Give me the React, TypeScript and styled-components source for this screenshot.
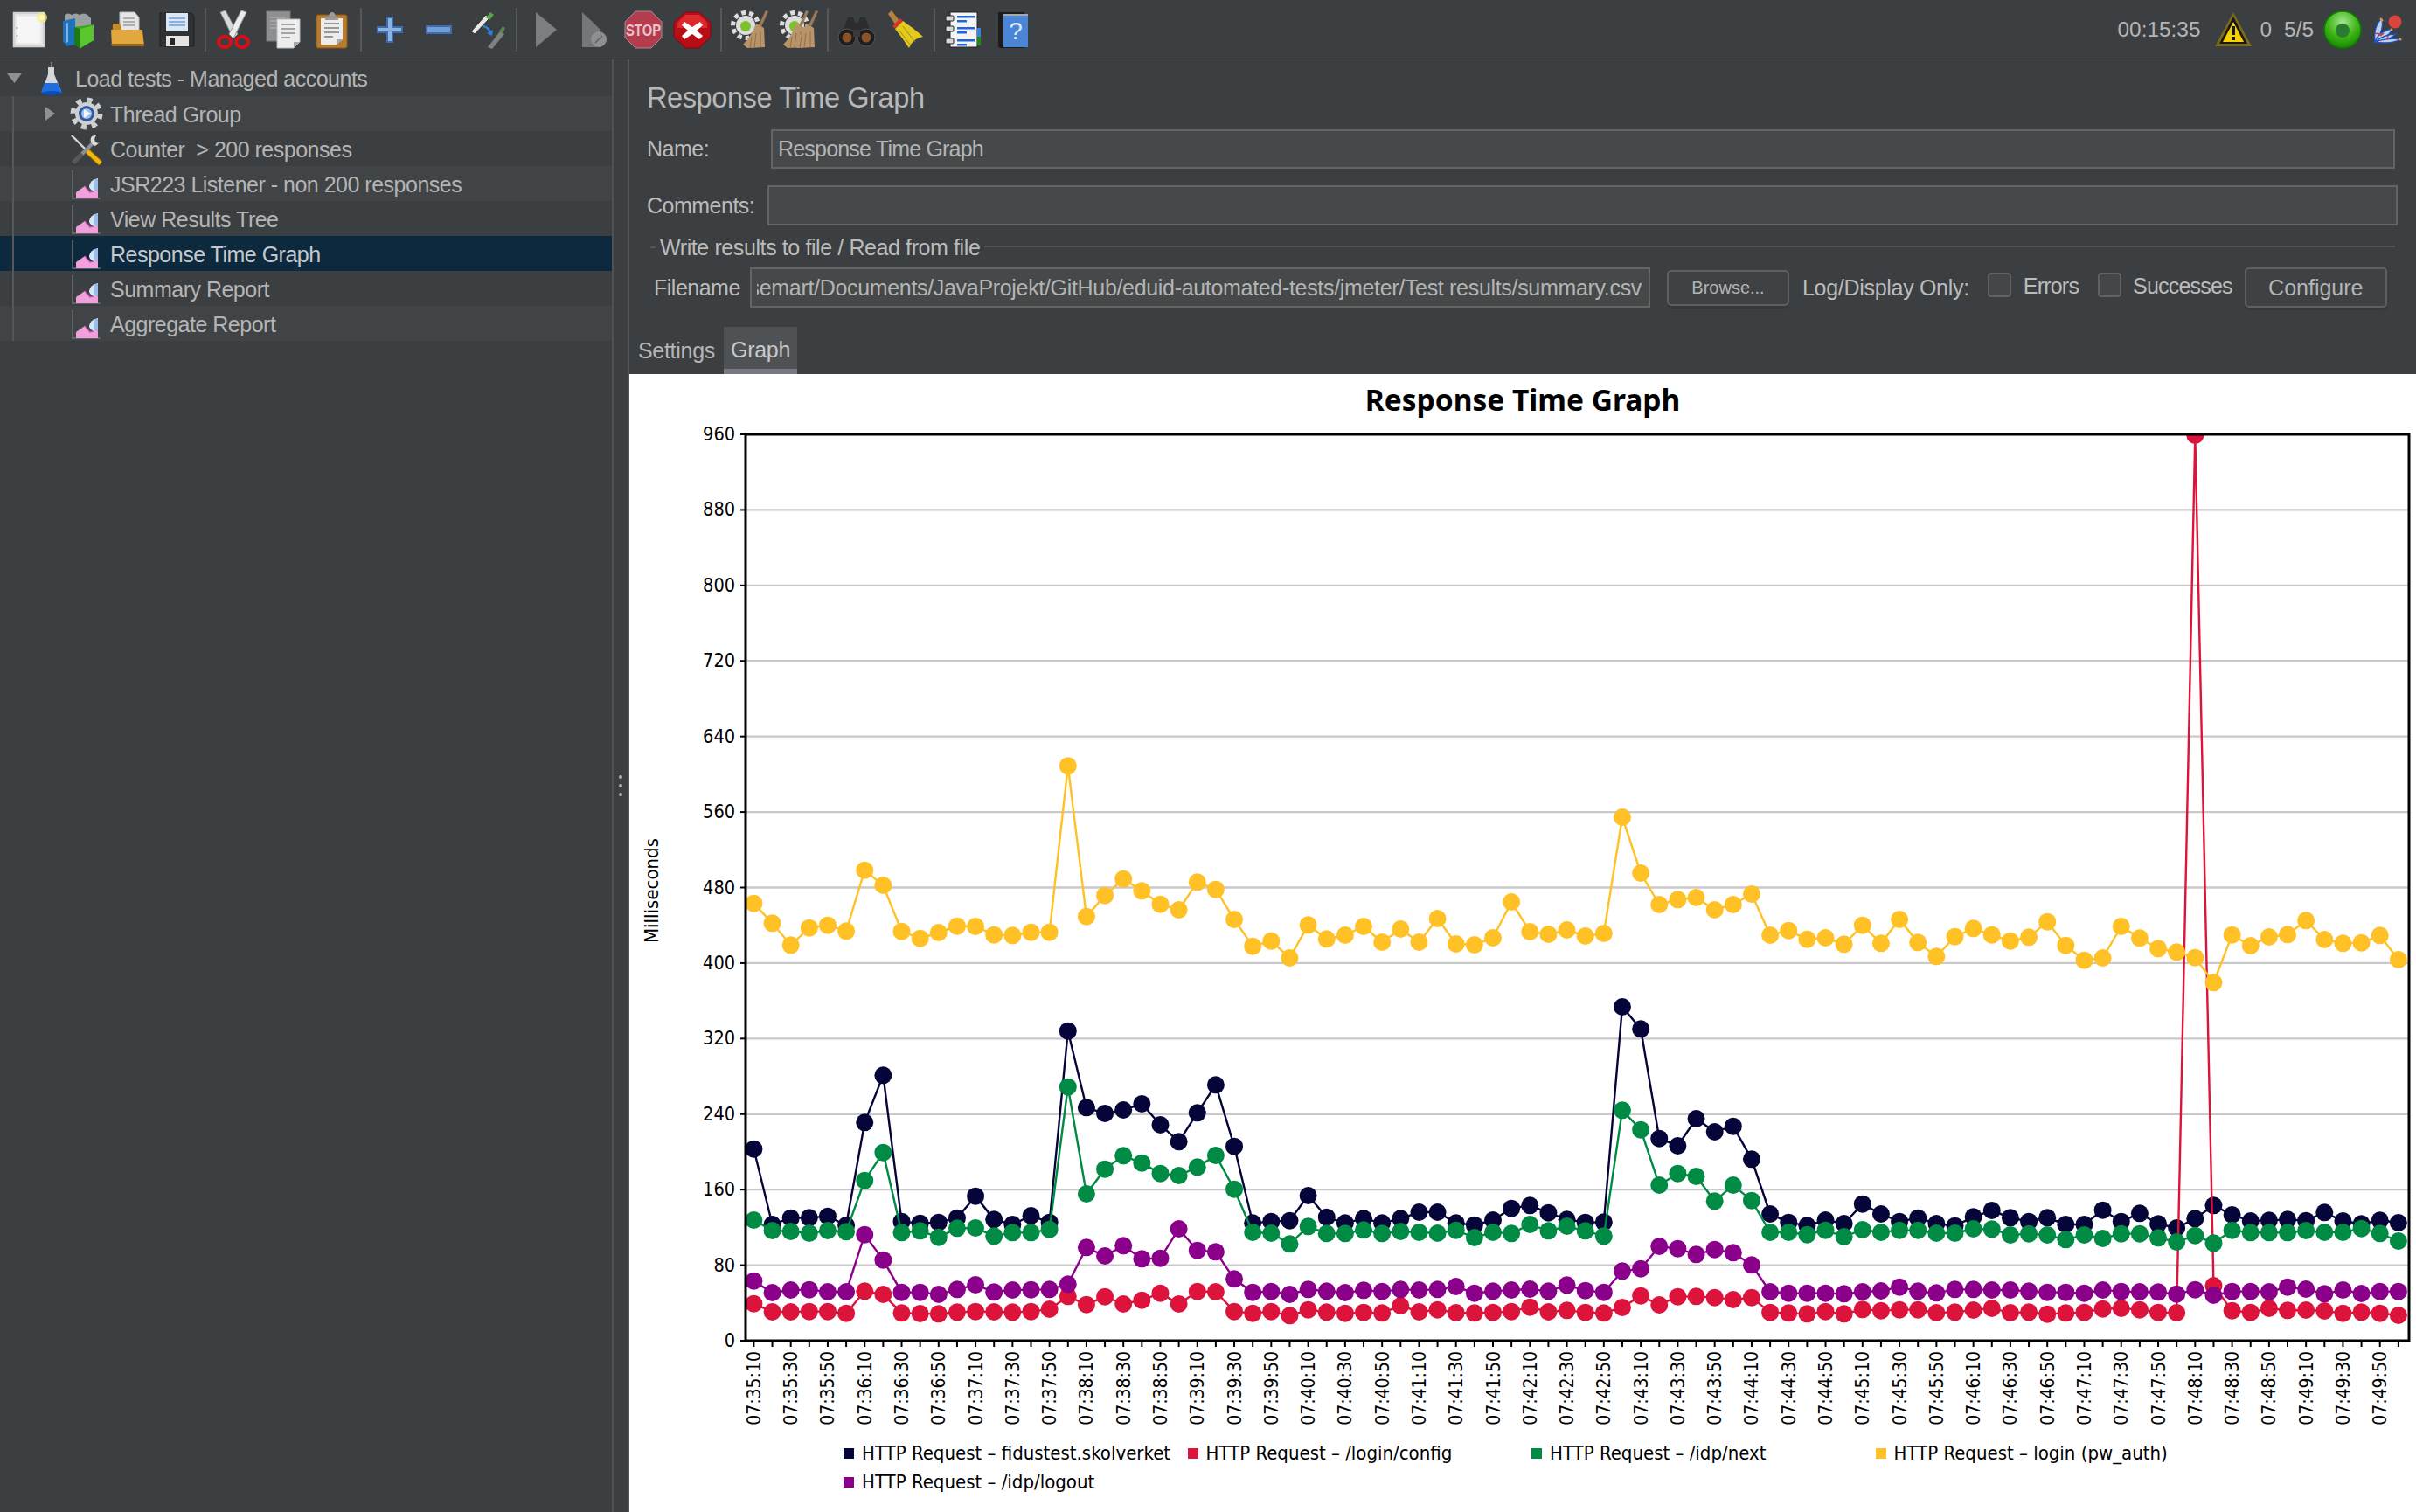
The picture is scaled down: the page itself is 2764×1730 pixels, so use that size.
import React from "react";
import styled, { createGlobalStyle } from "styled-components";

const UI_FONT = `"Liberation Sans", Arial, sans-serif`;
const CHART_FONT = `"DejaVu Sans Condensed", "DejaVu Sans", sans-serif`;

const Global = createGlobalStyle`
  html, body { margin: 0; padding: 0; background: #3c3f41; }
  #root { width: 2764px; height: 1730px; overflow: hidden; }
`;

const Frame = styled.div`
  width: 2764px; height: 1730px; display: flex; flex-direction: column;
  background: #3c3f41; color: #bbbbbb; font-family: ${UI_FONT}; font-size: 25px;
`;
const Toolbar = styled.header`
  height: 68px; flex: none; box-sizing: border-box; display: flex; align-items: center;
  padding-left: 6px; padding-right: 12px; border-bottom: 1px solid #323436;
`;
const ToolButton = styled.div`
  width: 56px; height: 67px; flex: none; display: flex; align-items: center; justify-content: center;
  svg { width: 44px; height: 44px; display: block; }
`;
const ToolSep = styled.div`
  width: 2px; height: 50px; flex: none; margin: 0 4px; background: #55585a;
`;
const Status = styled.div`
  margin-left: auto; display: flex; align-items: center; color: #b5b5b5; font-size: 24.4px;
`;
const StatusText = styled.span<{ $left: number }>`
  margin-left: ${(p) => p.$left}px; white-space: nowrap;
`;
const StatusIcon = styled.div<{ $left: number }>`
  margin-left: ${(p) => p.$left}px; width: 44px; height: 44px; flex: none;
  svg { width: 44px; height: 44px; display: block; }
`;
const Body = styled.div`
  flex: 1; min-height: 0; display: flex;
`;
const Sidebar = styled.aside`
  width: 700px; flex: none; display: flex; flex-direction: column; letter-spacing: -0.5px;
`;
const TreeChildren = styled.div`
  position: relative;
  &::before { content: ""; position: absolute; left: 14px; top: 0; bottom: 0; width: 2px; background: #55585a; z-index: 1; }
`;
const Row = styled.div<{ $level: number; $selected?: boolean; $odd?: boolean }>`
  height: 40px; display: flex; align-items: center; white-space: nowrap;
  padding-left: ${(p) => (p.$level === 0 ? 8 : 52)}px;
  background: ${(p) => (p.$selected ? "#0d293e" : p.$odd ? "#414447" : "#3c3f41")};
  color: ${(p) => (p.$selected ? "#c4c8cb" : "#b4b4b4")};
`;
const RootRow = styled(Row)`
  height: 42px;
`;
const RowLabel = styled.span`
  padding-top: 3px; white-space: pre;
`;
const CaretSlot = styled.div<{ $level: number }>`
  width: ${(p) => (p.$level === 0 ? 31 : 27)}px; flex: none; display: flex; align-items: center;
  svg { display: block; }
`;
const TreeIcon = styled.div`
  width: 40px; height: 40px; flex: none; margin-right: 7px;
  svg { width: 40px; height: 40px; display: block; }
`;
const Splitter = styled.div`
  width: 20px; flex: none; box-sizing: border-box; border-left: 2px solid #505355; border-right: 2px solid #505355;
  display: flex; flex-direction: column; align-items: center; justify-content: center; gap: 6px;
`;
const GripDot = styled.span`
  width: 4px; height: 4px; border-radius: 50%; background: #b5b5b5;
`;
const Main = styled.main`
  flex: 1; min-width: 0; display: flex; flex-direction: column;
`;
const PanelTitle = styled.div`
  height: 44px; margin: 22px 0 0 20px; font-size: 32.5px; line-height: 44px; color: #b8b8b8; letter-spacing: -0.4px;
`;
const FieldRow = styled.div<{ $top: number; $height: number; $right: number }>`
  height: ${(p) => p.$height}px; margin: ${(p) => p.$top}px ${(p) => p.$right}px 0 20px; display: flex; align-items: center;
`;
const FieldLabel = styled.label<{ $width: number }>`
  width: ${(p) => p.$width}px; flex: none; letter-spacing: -0.5px;
`;
const Input = styled.div`
  flex: 1; height: 100%; box-sizing: border-box; background: #45494a; border: 2px solid #646464;
  display: flex; align-items: center; padding-left: 6px; overflow: hidden; white-space: nowrap; letter-spacing: -0.8px;
  color: #b4b4b4;
`;
const GroupHead = styled.div`
  height: 38px; margin: 6px 24px 0 24px; display: flex; align-items: center; gap: 5px; white-space: nowrap;
  letter-spacing: -0.4px;
  &::before { content: ""; width: 6px; height: 2px; background: #535658; flex: none; }
  &::after { content: ""; flex: 1; height: 2px; background: #535658; margin-top: -2px; }
`;
const FileRow = styled.div`
  height: 46px; margin: 4px 0 0 28px; display: flex; align-items: center; white-space: nowrap;
`;
const FileInput = styled.div`
  width: 1030px; height: 100%; flex: none; box-sizing: border-box; background: #45494a; border: 2px solid #646464;
  display: flex; align-items: center; padding: 0 8px 0 6px; color: #b4b4b4;
`;
const FileClip = styled.div`
  flex: 1; min-width: 0; display: flex; justify-content: flex-end; overflow: hidden; letter-spacing: -0.32px;
`;
const PushButton = styled.button<{ $left: number; $width: number; $height: number; $size: number }>`
  margin-left: ${(p) => p.$left}px; width: ${(p) => p.$width}px; height: ${(p) => p.$height}px; flex: none;
  box-sizing: border-box; padding: 0; background: #3e4244; color: #b4b4b4; border: 2px solid #5e6060; border-radius: 5px;
  font-family: ${UI_FONT}; font-size: ${(p) => p.$size}px; box-shadow: 0 3px 0 #36383a;
`;
const PlainLabel = styled.span<{ $left: number }>`
  margin-left: ${(p) => p.$left}px; letter-spacing: -0.3px;
`;
const CheckLabel = styled.span<{ $left: number }>`
  margin-left: ${(p) => p.$left}px; letter-spacing: -0.8px; margin-top: -4px;
`;
const CheckBox = styled.span<{ $left: number }>`
  margin-left: ${(p) => p.$left}px; width: 27px; height: 28px; box-sizing: border-box; flex: none; margin-top: -6px;
  background: #43474a; border: 2px solid #5f6264; border-radius: 4px;
`;
const Tabs = styled.nav`
  height: 54px; margin-top: 22px; display: flex; flex: none; padding-left: 10px;
`;
const Tab = styled.div<{ $active?: boolean }>`
  height: 100%; box-sizing: border-box; display: flex; align-items: center; letter-spacing: -0.3px;
  justify-content: ${(p) => (p.$active ? "center" : "flex-start")};
  width: ${(p) => (p.$active ? 84 : 98)}px;
  background: ${(p) => (p.$active ? "#4e5254" : "transparent")};
  border-bottom: ${(p) => (p.$active ? "6px solid #747a80" : "none")};
  padding-top: ${(p) => (p.$active ? 5 : 1)}px;
  color: ${(p) => (p.$active ? "#c8c8c8" : "#b4b4b4")};
`;
const ChartPanel = styled.section`
  flex: 1; min-height: 0; background: #ffffff; display: flex; flex-direction: column; color: #000;
`;
const ChartTitle = styled.h2`
  height: 52px; margin: 0; padding-top: 3px; box-sizing: content-box; text-align: center; font: bold 33.5px/52px "Noto Sans", sans-serif;
`;
const PlotSvg = styled.svg`
  width: 2044px; height: 1157px; margin-top: 1px; display: block; flex: none;
`;
const Legend = styled.div`
  display: grid; grid-template-columns: repeat(4, 393.5px); grid-auto-rows: 33px; padding: 5px 0 0 245px;
`;
const LegendItem = styled.div`
  display: flex; align-items: center; gap: 9px; font: 22px ${CHART_FONT}; white-space: nowrap;
`;
const Swatch = styled.span<{ $color: string }>`
  width: 12px; height: 12px; flex: none; background: ${(p) => p.$color};
`;

/* ---------- chart data: pixel rows read from the plot ---------- */
const NAVY = [341,600,578,577,572,603,250,88,590,596,593,578,503,583,600,570,593,-64,199,219,207,186,258,316,217,121,332,
  595,590,587,501,575,595,580,595,580,558,558,595,602,585,545,535,560,583,593,592,-147,-71,305,330,237,282,263,376,564,593,604,585,
  597,530,564,590,578,597,605,574,552,577,590,577,600,600,551,590,562,598,612,580,535,567,588,586,583,587,559,588,598,586,594];
const GREEN = [585,621,624,630,621,625,449,353,628,622,644,613,612,640,628,628,617,128,495,410,364,389,425,432,403,363,479,
  627,630,667,607,631,631,619,631,624,627,630,620,645,627,631,600,622,606,622,640,208,275,465,425,435,520,465,518,627,627,635,620,
  642,618,627,620,620,630,630,615,616,636,632,636,652,636,648,632,632,646,660,638,664,620,628,628,628,621,627,627,614,631,657];
const PURPLE = [794,834,825,824,831,831,635,722,833,833,840,823,807,832,825,824,823,805,679,708,673,718,716,615,689,694,787,
  833,830,840,823,829,834,826,830,823,825,823,813,836,829,825,822,829,808,827,833,760,752,675,683,703,686,697,739,831,836,836,836,
  838,831,828,815,829,835,823,823,825,825,829,833,833,836,825,830,831,832,839,824,843,830,830,831,815,822,838,825,837,830,830];
const RED = [872,900,900,899,899,905,829,840,904,906,907,901,899,900,901,899,891,847,875,848,873,860,836,873,830,831,899,
  905,899,913,893,901,905,902,904,879,900,893,903,904,902,899,884,900,895,902,904,885,845,876,848,847,851,858,851,902,904,907,899,
  907,892,896,893,893,903,901,894,888,903,901,908,904,902,890,888,893,902,903,-2109,810,896,902,888,895,894,897,905,901,905,912];
const YELLOW = [578,646,721,662,653,673,464,516,674,698,678,656,657,686,688,677,677,106,623,551,494,535,581,600,505,530,633,725,707,765,652,700,
  687,657,711,666,711,630,717,720,696,573,675,684,669,690,681,282,474,582,565,558,600,582,546,687,671,701,696,718,653,715,633,712,760,692,664,686,707,694,641,722,773,765,657,697,733,745,764,850,686,723,693,685,637,702,715,713,688,771];

const PLOT = { left: 853, right: 2756, top: 496, bottom: 1533, x0: 862.4, dx: 21.14 };
const xAt = (i: number) => PLOT.x0 + i * PLOT.dx;
const SERIES = [
  { name: "HTTP Request – fidustest.skolverket", color: "#05053a", base: 1200, rows: NAVY },
  { name: "HTTP Request – /login/config", color: "#dc143c", base: 1200, rows: RED },
  { name: "HTTP Request – /idp/next", color: "#008b45", base: 1200, rows: GREEN },
  { name: "HTTP Request – login (pw_auth)", color: "#ffc125", base: 840, rows: YELLOW },
  { name: "HTTP Request – /idp/logout", color: "#8b008b", base: 1200, rows: PURPLE },
];
const pad = (n: number) => String(n).padStart(2, "0");
const stamp = (i: number) => {
  const t = 7 * 3600 + 35 * 60 + 10 + i * 10;
  return `${pad(Math.floor(t / 3600))}:${pad(Math.floor(t / 60) % 60)}:${pad(t % 60)}`;
};
const Y_VALUES = [0, 80, 160, 240, 320, 400, 480, 560, 640, 720, 800, 880, 960];
const yOfValue = (v: number) => PLOT.bottom - (v * (PLOT.bottom - PLOT.top)) / 960;

const Plot = () => (
  <PlotSvg viewBox="720 483 2044 1157">
    <defs>
      <clipPath id="plotClip">
        <rect x={PLOT.left} y={PLOT.top} width={PLOT.right - PLOT.left} height={PLOT.bottom - PLOT.top} />
      </clipPath>
    </defs>
    {Y_VALUES.slice(1, -1).map((v) => (
      <line key={v} x1={PLOT.left} x2={PLOT.right} y1={yOfValue(v)} y2={yOfValue(v)} stroke="#c9c9c9" strokeWidth="2.4" />
    ))}
    <g clipPath="url(#plotClip)">
      {SERIES.map((s) => {
        const pts = s.rows.map((z, i) => [xAt(i), s.base + z / 3]);
        return (
          <g key={s.name} fill={s.color}>
            <polyline points={pts.map((p) => p.join(",")).join(" ")} fill="none" stroke={s.color} strokeWidth="2.4" />
            {pts.map((p, i) => <circle key={i} cx={p[0]} cy={p[1]} r="10" />)}
          </g>
        );
      })}
    </g>
    <rect x={PLOT.left} y={PLOT.top} width={PLOT.right - PLOT.left} height={PLOT.bottom - PLOT.top} fill="none" stroke="#000" strokeWidth="3" />
    {Y_VALUES.map((v) => (
      <g key={v}>
        <line x1={PLOT.left - 6} x2={PLOT.left} y1={yOfValue(v)} y2={yOfValue(v)} stroke="#000" strokeWidth="2" />
        <text x={841} y={yOfValue(v) + 7} textAnchor="end" fontFamily={CHART_FONT} fontSize="21.5" fill="#000">{v}</text>
      </g>
    ))}
    {SERIES[0].rows.map((_, i) => (
      <line key={i} x1={xAt(i)} x2={xAt(i)} y1={PLOT.bottom} y2={PLOT.bottom + 7} stroke="#000" strokeWidth="2" />
    ))}
    {SERIES[0].rows.map((_, i) =>
      i % 2 === 0 ? (
        <text key={i} transform={`translate(${xAt(i) + 7.5} 1545) rotate(-90)`} textAnchor="end" fontFamily={CHART_FONT} fontSize="21" fill="#000">
          {stamp(i)}
        </text>
      ) : null
    )}
    <text transform="translate(753 1018) rotate(-90)" textAnchor="middle" fontFamily={CHART_FONT} fontSize="22" fill="#000">Milliseconds</text>
  </PlotSvg>
);

/* ---------- toolbar icons ---------- */
const IconNew = () => (
  <svg viewBox="0 0 44 44">
    <rect x="4" y="3" width="34" height="38" fill="#e9e9e9" stroke="#d2d2d2" strokeWidth="2.5" />
    <rect x="8" y="7" width="26" height="30" fill="#f6f6f6" />
    <circle cx="7.5" cy="20" r="1" fill="#999" /><circle cx="7.5" cy="29" r="1" fill="#999" />
    <circle cx="36" cy="8" r="6" fill="#f5ec8a" opacity=".75" /><circle cx="36" cy="8" r="3" fill="#fff8b0" />
  </svg>
);
const IconTemplates = () => (
  <svg viewBox="0 0 44 44">
    <path d="M6 5q4-3 8 0q5-3 9 0q5-3 9 0l4 4v14H6z" fill="#9aa0a2" />
    <path d="M4 12l14-3v30l-10 2-4-6z" fill="#1d72c0" /><path d="M7 15l3-1v22l-3 1z" fill="#7cb6e6" />
    <path d="M17 19l22-3v18L24 43l-7-4z" fill="#36a81c" /><path d="M24 21l15-4v17L24 43z" fill="#58c62c" />
    <path d="M17 19l7 2v22l-7-4z" fill="#1d7a12" />
  </svg>
);
const IconOpen = () => (
  <svg viewBox="0 0 44 44">
    <path d="M13 2h17l5 6v22H13z" fill="#e6e6e6" stroke="#bdbdbd" />
    <path d="M17 9h13M17 13h13M17 17h13" stroke="#9c9c9c" strokeWidth="1.5" />
    <path d="M5 15h7l1-2 2 9h24l2 19H4z" fill="#c58a27" />
    <path d="M3 22h35l3 19H4z" fill="#e0a83e" /><path d="M3 38h38v3H4z" fill="#96661a" />
  </svg>
);
const IconSave = () => (
  <svg viewBox="0 0 44 44">
    <path d="M3 3h36l3 3v35H3z" fill="#2f3133" stroke="#1f2022" />
    <rect x="10" y="3" width="25" height="21" fill="#dbe7f5" />
    <path d="M13 9h19M13 13h19M13 17h19" stroke="#6f9fd4" strokeWidth="1.6" />
    <rect x="10" y="29" width="26" height="12" fill="#e4e4e4" /><rect x="14" y="31" width="6" height="9" fill="#262626" />
  </svg>
);
const IconCut = () => (
  <svg viewBox="0 0 44 44">
    <path d="M6 2l6-2 14 27-5 5z" fill="#d9d9d9" stroke="#8d8d8d" /><path d="M36 2l-6-2L16 27l5 5z" fill="#ececec" stroke="#9a9a9a" />
    <ellipse cx="11" cy="36" rx="7" ry="6" fill="none" stroke="#d80f1b" strokeWidth="4" />
    <ellipse cx="31" cy="36" rx="7" ry="6" fill="none" stroke="#d80f1b" strokeWidth="4" />
  </svg>
);
const IconCopy = () => (
  <svg viewBox="0 0 44 44">
    <rect x="3" y="1" width="27" height="34" fill="#8d8f91" stroke="#77797a" />
    <path d="M7 8h18M7 12h18M7 16h18M7 20h18" stroke="#aaa" strokeWidth="1.5" />
    <path d="M15 10h26v26l-7 7H15z" fill="#ededed" stroke="#bcbcbc" /><path d="M34 43v-7h7z" fill="#a8a8a8" />
    <path d="M20 16h16M20 21h16M20 26h16M20 31h10" stroke="#8c8c8c" strokeWidth="1.6" />
  </svg>
);
const IconPaste = () => (
  <svg viewBox="0 0 44 44">
    <rect x="4" y="5" width="35" height="38" rx="2" fill="#b87a2c" stroke="#8a5a1c" />
    <path d="M9 9h25v24l-7 6H9z" fill="#ececec" /><path d="M27 39v-6h7z" fill="#a9a9a9" />
    <path d="M13 15h17M13 20h17M13 25h17M13 30h10" stroke="#7d7d7d" strokeWidth="1.6" />
    <path d="M14 7h4q1-5 4-5t4 5h3v4H14z" fill="#9a9a9a" />
  </svg>
);
const IconPlus = () => (
  <svg viewBox="0 0 44 44">
    <path d="M19 8h6v11h11v6H25v11h-6V25H8v-6h11z" fill="#8ab4e4" stroke="#3f6cae" strokeWidth="2" />
  </svg>
);
const IconMinus = () => (
  <svg viewBox="0 0 44 44">
    <rect x="8" y="18" width="28" height="8" fill="#6f9fd8" stroke="#3f6cae" strokeWidth="2" />
  </svg>
);
const IconToggle = () => (
  <svg viewBox="0 0 44 44">
    <path d="M3 24L20 5l4 4L7 27z" fill="#e8e8e8" stroke="#333" strokeWidth="1" />
    <path d="M20 8l5-6 4 3-5 6z" fill="#5ba04a" />
    <path d="M17 18q6 1 9 9" fill="none" stroke="#2d7fe0" strokeWidth="2.4" /><path d="M21 26l6 3 1-7z" fill="#2d7fe0" />
    <path d="M22 42l14-18 5 3-14 17z" fill="#8a8f8a" opacity=".85" /><path d="M35 24l4-6 3 2-3 7z" fill="#5c8a50" opacity=".9" />
  </svg>
);
const IconPlay = () => (
  <svg viewBox="0 0 44 44"><path d="M11 2l24 20-24 20z" fill="#7c7e80" /></svg>
);
const IconPlayNoTimer = () => (
  <svg viewBox="0 0 44 44">
    <path d="M8 2l20 19v21H8z" fill="#75777a" />
    <circle cx="27" cy="33" r="9" fill="#8d8f91" /><path d="M23 37l8-8" stroke="#5e6062" strokeWidth="1.5" />
  </svg>
);
const IconStop = () => (
  <svg viewBox="0 0 44 44">
    <path d="M13 1h18l12 12v18L31 43H13L1 31V13z" fill="#b53c4e" stroke="#9a8f92" strokeWidth="1" />
    <text transform="translate(22 29) scale(.78 1)" textAnchor="middle" fontFamily={UI_FONT} fontWeight="bold" fontSize="19" fill="#e9c3c9">STOP</text>
  </svg>
);
const IconShutdown = () => (
  <svg viewBox="0 0 44 44">
    <path d="M14 2h16l13 12v16L30 43H14L1 30V14z" fill="#b80d14" stroke="#7a0c10" strokeWidth="1" />
    <path d="M5 14L14 5h16l9 9v6H5z" fill="#dd2a2d" />
    <path d="M13 13l9 6 9-6 3 4-7 6 7 6-4 4-8-6-9 6-3-4 7-6-7-6z" fill="#fff" />
  </svg>
);
const Broom = ({ x = 0 }: { x?: number }) => (
  <g transform={`translate(${x} 0)`}>
    <path d="M40 0l3 1-8 18-3-2z" fill="#9c7a58" />
    <path d="M29 15l9 5 1 22-20 1-5-4q10-10 15-24z" fill="#b99469" />
    <path d="M24 30l-2 13M29 26l-2 17M34 24l0 18" stroke="#8f6f4c" strokeWidth="1" />
  </g>
);
const GearPlate = () => (
  <g>
    <circle cx="17" cy="17" r="11" fill="#dcdcdc" />
    <circle cx="17" cy="17" r="14.5" fill="none" stroke="#dcdcdc" strokeWidth="5" strokeDasharray="5 4" />
    <circle cx="17" cy="18" r="6" fill="#7cc02a" />
  </g>
);
const IconClear = () => (<svg viewBox="0 0 44 44"><GearPlate /><Broom /></svg>);
const IconClearAll = () => (<svg viewBox="0 0 44 44"><GearPlate /><Broom x={-10} /><Broom x={1} /></svg>);
const IconBinoculars = () => (
  <svg viewBox="0 0 44 44">
    <path d="M12 8h6l2 6h4l2-6h6l8 22H30l-4-8h-8l-4 8H4z" fill="#2c2c2e" />
    <circle cx="11" cy="31" r="10" fill="#1e1e20" stroke="#555" /><circle cx="33" cy="31" r="10" fill="#1e1e20" stroke="#555" />
    <circle cx="11" cy="31" r="5.5" fill="#8a5226" /><circle cx="33" cy="31" r="5.5" fill="#8a5226" />
    <rect x="18" y="22" width="8" height="8" fill="#3a3a3c" />
  </svg>
);
const IconBroomYellow = () => (
  <svg viewBox="0 0 44 44">
    <path d="M2 4l4-4 10 13-5 4z" fill="#b5823e" />
    <path d="M7 18l9-9 3 3-9 9z" fill="#d6322a" />
    <path d="M10 21l9-9q12 8 23 18-12 2-16 13-8-12-16-22z" fill="#e3c81e" />
    <path d="M14 22l14 18M19 18l14 18" stroke="#a58f12" strokeWidth="1" />
  </svg>
);
const IconFunctions = () => (
  <svg viewBox="0 0 44 44">
    <rect x="7" y="2" width="31" height="40" fill="#f4f4f4" stroke="#222" strokeWidth="1" />
    <rect x="38" y="20" width="4" height="10" fill="#3f7fe0" /><rect x="38" y="30" width="4" height="10" fill="#1e8a1e" />
    {[6, 18, 32].map((y) => (<rect key={y} x="2" y={y} width="9" height="6" rx="1" fill="#d8d8d8" stroke="#222" />))}
    {[6, 11, 19, 24, 33, 38].map((y, i) => (
      <rect key={y} x="15" y={y} width={i % 2 ? 11 : 20} height="2.5" fill="#1e66e0" />
    ))}
  </svg>
);
const IconHelp = () => (
  <svg viewBox="0 0 44 44">
    <path d="M6 2h30v41H9q-3 0-3-3z" fill="#1b1c1e" />
    <rect x="12" y="4" width="28" height="38" fill="#4b86d6" /><rect x="12" y="4" width="28" height="2" fill="#a6a8aa" />
    <text x="26" y="33" textAnchor="middle" fontFamily={UI_FONT} fontSize="28" fill="#dbe8f8">?</text>
  </svg>
);
const IconWarning = () => (
  <svg viewBox="0 0 44 44">
    <path d="M22 2L43 41H1z" fill="#7b6a1a" />
    <path d="M22 7L38 38H6z" fill="#181818" /><path d="M22 13L34 36H10z" fill="#f7d000" />
    <rect x="20" y="18" width="4" height="10" fill="#181818" /><rect x="20" y="30" width="4" height="4" fill="#181818" />
  </svg>
);
const IconOnline = () => (
  <svg viewBox="0 0 44 44">
    <defs>
      <radialGradient id="greenBall" cx="50%" cy="30%" r="70%">
        <stop offset="0" stopColor="#a4e892" /><stop offset=".55" stopColor="#42b81a" /><stop offset="1" stopColor="#158a00" />
      </radialGradient>
    </defs>
    <circle cx="22" cy="22" r="21" fill="url(#greenBall)" stroke="#0e7a00" strokeWidth="1.5" />
    <circle cx="22" cy="23" r="8" fill="#2b7a32" />
  </svg>
);
const IconFeather = () => (
  <svg viewBox="0 0 44 44">
    <g fill="#bcd0ee" stroke="#1f4fc0" strokeWidth="1.3">
      <path d="M9 36Q7 18 17 9q3 14-8 27z" />
      <path d="M9 36Q13 24 29 21q-6 12-20 15z" />
      <path d="M9 36Q20 27 33 27q-10 9-24 9z" />
      <path d="M9 36q14-5 30-3-14 6-30 3z" />
    </g>
    <path d="M15 9l3 3M27 21l2 2M37 32l2 2" stroke="#f0a030" strokeWidth="2" />
    <path d="M9 26l6 1M15 29l4-3M23 33l1-4" stroke="#d83a3a" strokeWidth="1.6" />
    <circle cx="32" cy="13" r="7.5" fill="#d9453e" />
  </svg>
);

/* ---------- tree icons ---------- */
const TreeFlask = () => (
  <svg viewBox="0 0 40 40">
    <path d="M19 2l2 0v6l-2 0z" fill="#7b7e80" />
    <path d="M16 8h7v8l8 19H9l7-19z" fill="#d4d6d8" />
    <path d="M12 26h15l5 11H8z" fill="#1f6ee0" /><ellipse cx="20" cy="37.5" rx="11" ry="2.5" fill="#0e4cb8" />
  </svg>
);
const TreeGear = () => (
  <svg viewBox="0 0 40 40">
    <circle cx="20" cy="20" r="13" fill="#cfd0d2" />
    <circle cx="20" cy="20" r="15.5" fill="none" stroke="#cfd0d2" strokeWidth="6" strokeDasharray="6 6.17" />
    <circle cx="20" cy="20" r="9" fill="#2f5aa0" /><circle cx="20" cy="20" r="6" fill="#a4bfe4" />
    <path d="M17 15l8 5-8 5z" fill="#f3f6fb" />
  </svg>
);
const TreeTools = () => (
  <svg viewBox="0 0 40 40">
    <path d="M3 5l19 19" stroke="#d7d7d7" strokeWidth="2.4" />
    <path d="M21 23l15 14" stroke="#8a6a00" strokeWidth="6.5" /><path d="M21 23l15 14" stroke="#f2b90c" strokeWidth="4.5" />
    <path d="M5 36l24-24" stroke="#8d8f90" strokeWidth="4" /><path d="M5 36l10-10" stroke="#55585a" strokeWidth="5" />
    <path d="M26 6a7 7 0 0 0 4 11l5-4q-3 2-5-1t1-7q1-1-5 1z" fill="#dcdcdc" />
  </svg>
);
const TreeGraph = () => (
  <svg viewBox="0 0 40 40">
    <path d="M4 5v32h32" fill="none" stroke="#6c6f71" strokeWidth="1.5" />
    <path d="M8 37v-7l10-7 6 7 9-2v9z" fill="#f0a0dc" />
    <path d="M18 23l6 7 9-3" fill="none" stroke="#c452a8" strokeWidth="1.5" />
    <path d="M23 23q1-7 10-9v14l-4 1q-6-2-6-6z" fill="#d6e6fb" />
    <path d="M29 15h4v13h-4z" fill="#9cbdec" />
  </svg>
);

const Caret = ({ open }: { open: boolean }) =>
  open ? (
    <svg width="17" height="11" viewBox="0 0 17 11"><path d="M0 0h17L8.5 11z" fill="#8f9294" /></svg>
  ) : (
    <svg width="11" height="16" viewBox="0 0 11 16"><path d="M0 0l11 8L0 16z" fill="#8f9294" /></svg>
  );

const TOOLS: (React.FC | null)[] = [
  IconNew, IconTemplates, IconOpen, IconSave, null,
  IconCut, IconCopy, IconPaste, null,
  IconPlus, IconMinus, IconToggle, null,
  IconPlay, IconPlayNoTimer, IconStop, IconShutdown, null,
  IconClear, IconClearAll, null,
  IconBinoculars, IconBroomYellow, null,
  IconFunctions, IconHelp,
];

const CHILDREN = [
  { label: "Thread Group", Icon: TreeGear, caret: true },
  { label: "Counter  > 200 responses", Icon: TreeTools },
  { label: "JSR223 Listener - non 200 responses", Icon: TreeGraph },
  { label: "View Results Tree", Icon: TreeGraph },
  { label: "Response Time Graph", Icon: TreeGraph, selected: true },
  { label: "Summary Report", Icon: TreeGraph },
  { label: "Aggregate Report", Icon: TreeGraph },
];

export default function App() {
  return (
    <Frame>
      <Global />
      <Toolbar>
        {TOOLS.map((Tool, i) =>
          Tool ? <ToolButton key={i}><Tool /></ToolButton> : <ToolSep key={i} />
        )}
        <Status>
          <StatusText $left={0}>00:15:35</StatusText>
          <StatusIcon $left={15}><IconWarning /></StatusIcon>
          <StatusText $left={9}>0</StatusText>
          <StatusText $left={14}>5/5</StatusText>
          <StatusIcon $left={11}><IconOnline /></StatusIcon>
          <StatusIcon $left={6}><IconFeather /></StatusIcon>
        </Status>
      </Toolbar>
      <Body>
        <Sidebar>
          <RootRow $level={0}>
            <CaretSlot $level={0}><Caret open /></CaretSlot>
            <TreeIcon><TreeFlask /></TreeIcon>
            <RowLabel>Load tests - Managed accounts</RowLabel>
          </RootRow>
          <TreeChildren>
            {CHILDREN.map(({ label, Icon, caret, selected }, i) => (
              <Row key={label} $level={1} $selected={selected} $odd={i % 2 === 0}>
                <CaretSlot $level={1}>{caret ? <Caret open={false} /> : null}</CaretSlot>
                <TreeIcon><Icon /></TreeIcon>
                <RowLabel>{label}</RowLabel>
              </Row>
            ))}
          </TreeChildren>
        </Sidebar>
        <Splitter><GripDot /><GripDot /><GripDot /></Splitter>
        <Main>
          <PanelTitle>Response Time Graph</PanelTitle>
          <FieldRow $top={14} $height={45} $right={24}>
            <FieldLabel $width={142}>Name:</FieldLabel>
            <Input>Response Time Graph</Input>
          </FieldRow>
          <FieldRow $top={19} $height={46} $right={21}>
            <FieldLabel $width={138}>Comments:</FieldLabel>
            <Input />
          </FieldRow>
          <GroupHead>Write results to file / Read from file</GroupHead>
          <FileRow>
            <FieldLabel $width={110}>Filename</FieldLabel>
            <FileInput>
              <FileClip>semart/Documents/JavaProjekt/GitHub/eduid-automated-tests/jmeter/Test results/summary.csv</FileClip>
            </FileInput>
            <PushButton $left={19} $width={140} $height={41} $size={20}>Browse...</PushButton>
            <PlainLabel $left={15}>Log/Display Only:</PlainLabel>
            <CheckBox $left={21} />
            <CheckLabel $left={14}>Errors</CheckLabel>
            <CheckBox $left={22} />
            <CheckLabel $left={13}>Successes</CheckLabel>
            <PushButton $left={14} $width={163} $height={46} $size={25}>Configure</PushButton>
          </FileRow>
          <Tabs>
            <Tab>Settings</Tab>
            <Tab $active>Graph</Tab>
          </Tabs>
          <ChartPanel>
            <ChartTitle>Response Time Graph</ChartTitle>
            <Plot />
            <Legend>
              {SERIES.map((s) => (
                <LegendItem key={s.name}><Swatch $color={s.color} />{s.name}</LegendItem>
              ))}
            </Legend>
          </ChartPanel>
        </Main>
      </Body>
    </Frame>
  );
}
